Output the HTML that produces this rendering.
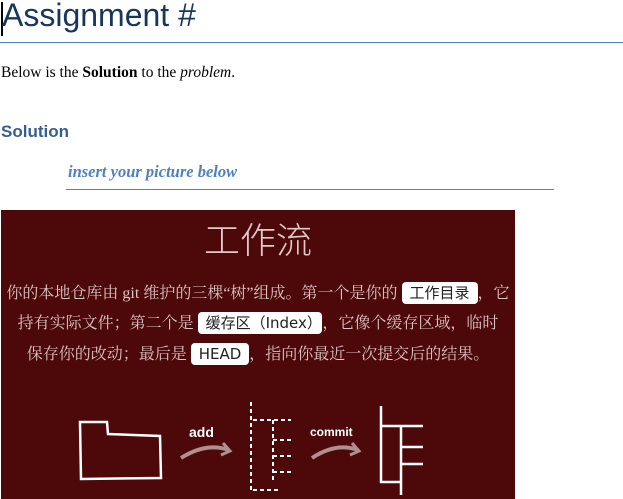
<!DOCTYPE html>
<html><head><meta charset="utf-8"><style>
body{margin:0;width:623px;height:499px;overflow:hidden;background:#fff;position:relative;font-family:"Liberation Sans",sans-serif}
.a{position:absolute;white-space:nowrap}
#img{position:absolute;left:1px;top:210px;width:514px;height:289px;background:#4d0909;color:#dcc4c4;font-family:"Liberation Serif","Noto Serif CJK SC",serif}
.ln{position:absolute;left:0;width:514px;text-align:center;font-size:16px;white-space:nowrap}
.b{background:#fff;color:#222;border-radius:4px;padding:2px 8px;font-family:"DejaVu Sans","Noto Sans CJK SC",sans-serif;font-size:15px}
</style></head><body>
<div class="a" style="left:1px;top:2px;width:2px;height:34px;background:#000"></div>
<div class="a" style="left:2px;top:-3px;font-size:32px;color:#17365d;font-family:'Liberation Sans',sans-serif">Assignment #</div>
<div class="a" style="left:0;top:42px;width:623px;height:1px;background:#4f81bd"></div>
<div class="a" style="left:1px;top:64px;font-size:15.5px;font-family:'Liberation Serif',serif;color:#000">Below is the <b>Solution</b> to the <i>problem</i>.</div>
<div class="a" style="left:1px;top:122px;font-size:17px;font-weight:bold;color:#365f91">Solution</div>
<div class="a" style="left:68px;top:162px;font-size:16.5px;font-weight:bold;font-style:italic;color:#4f81bd;font-family:'Liberation Serif',serif">insert your picture below</div>
<div class="a" style="left:66px;top:189px;width:488px;height:1px;background:#4f81bd"></div>
<div id="img">
<div class="ln" style="top:2px;font-size:36px;font-family:'Noto Sans CJK SC',sans-serif;font-weight:300;color:#e0c8c8">工作流</div>
<div class="ln" style="top:70px">你的本地仓库由 git 维护的三棵“树”组成。第一个是你的 <span class="b">工作目录</span>，它</div>
<div class="ln" style="top:100px">持有实际文件；第二个是 <span class="b">缓存区（Index）</span>，它像个缓存区域，临时</div>
<div class="ln" style="top:131px">保存你的改动；最后是 <span class="b">HEAD</span>，指向你最近一次提交后的结果。</div>
<svg style="position:absolute;left:0;top:0" width="514" height="289" fill="none" stroke="#fff" stroke-width="2.5">
<path d="M79 212 L106 212 L107 224 L159 226 L160 268 L80 269 Z"/>
<path d="M180 248 Q205 232 228 240" stroke="#b09090" stroke-width="4"/>
<path d="M222 233 L229 241 L220 245" stroke="#b09090" stroke-width="3"/>
<text x="188" y="227" fill="#fff" stroke="none" font-size="14" font-weight="bold" font-family="Liberation Sans">add</text>
<path d="M250 192 V280 M252 210 H290 M272 210 V270 M272 230 H292 M272 246 H292 M272 262 H292 M252 280 H280" stroke-dasharray="4 3" stroke-width="2"/>
<path d="M311 248 Q335 232 357 240" stroke="#b09090" stroke-width="4"/>
<path d="M351 233 L358 241 L349 245" stroke="#b09090" stroke-width="3"/>
<text x="309" y="226" fill="#fff" stroke="none" font-size="12" font-weight="bold" font-family="Liberation Sans">commit</text>
<path d="M380 196 V272 H400 V285 M380 216 H422 M400 216 V272 M400 237 H422 M400 254 H422"/>
</svg>
</div>
</body></html>
